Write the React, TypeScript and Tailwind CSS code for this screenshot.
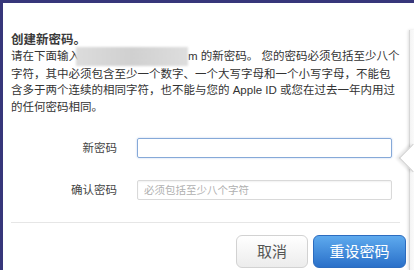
import React from "react";

const font = {
  fontFamily: '"Liberation Sans", "Noto Sans CJK SC", sans-serif',
};

// popover edge + arrow that sticks in from the right
const PopoverEdge: React.FC = () => (
  <>
    <div className="absolute left-[409px] top-[30px] bottom-0 w-[8px] border-l border-[#d6d6d6] bg-gradient-to-r from-[#f4f4f4] to-white shadow-[-1px_0_3px_rgba(0,0,0,0.12)]" />
    <div className="absolute left-[403px] top-[148px] w-[20px] h-[20px] rotate-45 bg-white border-l border-b border-[#cfcfcf] shadow-[-2px_2px_3px_rgba(0,0,0,0.10)]" />
  </>
);

const App: React.FC = () => {
  return (
    <div
      className="relative w-[414px] h-[270px] overflow-hidden bg-[#37367a] pt-[3px] pl-[3px]"
      style={font}
    >
      <div className="flex flex-col h-full bg-white pl-[8px] pr-[14px] text-[#333] text-[11.5px] leading-[16.4px]">
        <div className="mt-[29px] text-[12.5px] font-bold text-[#3a3a3a] leading-[16px]">
          创建新密码。
        </div>
        <div className="mt-[-1px] whitespace-nowrap flex items-center">
          <span>请在下面输入</span>
          <span className="inline-block -ml-[4px] w-[112px] h-[19px] bg-gradient-to-r from-[#dcdcdc] via-[#d0d0d0] to-[#dedede] blur-[1px]" />
          <span>m 的新密码。 您的密码必须包括至少八个</span>
        </div>
        <div className="whitespace-nowrap">
          字符，其中必须包含至少一个数字、一个大写字母和一个小写字母，不能包
        </div>
        <div className="whitespace-nowrap">
          含多于两个连续的相同字符，也不能与您的 Apple ID 或您在过去一年内用过
        </div>
        <div className="whitespace-nowrap">的任何密码相同。</div>

        <div className="mt-[23px] flex items-center">
          <label className="w-[106px] text-right text-[11.5px] text-[#444]">新密码</label>
          <input
            className="ml-[20px] w-[255px] h-[20px] rounded-[2px] border border-[#86a9d8] outline-none shadow-[0_0_2px_rgba(80,130,210,0.4)]"
            type="password"
          />
        </div>
        <div className="mt-[22px] flex items-center">
          <label className="w-[106px] text-right text-[11.5px] text-[#444]">确认密码</label>
          <input
            className="ml-[20px] w-[255px] h-[20px] rounded-[2px] border border-[#d9d9d9] px-[6px] text-[10.5px] outline-none placeholder:text-[#b0b0b0] shadow-[inset_0_1px_2px_rgba(0,0,0,0.06)]"
            placeholder="必须包括至少八个字符"
            type="password"
          />
        </div>

        <div className="mt-[22px] h-px w-[389px] bg-[#e6e6e6]" />

        <div className="mt-[12px] flex justify-end gap-[5px]">
          <button className="w-[72px] h-[33px] rounded-[6px] border border-[#d2d2d2] bg-gradient-to-b from-white to-[#ececec] text-[15px] text-[#555]">
            取消
          </button>
          <button className="w-[93px] h-[33px] -mr-[6px] rounded-[6px] border border-[#2c6cbf] bg-gradient-to-b from-[#5eaaee] to-[#2a70c9] text-[15px] text-white">
            重设密码
          </button>
        </div>
      </div>
      <PopoverEdge />
    </div>
  );
};

export default App;
